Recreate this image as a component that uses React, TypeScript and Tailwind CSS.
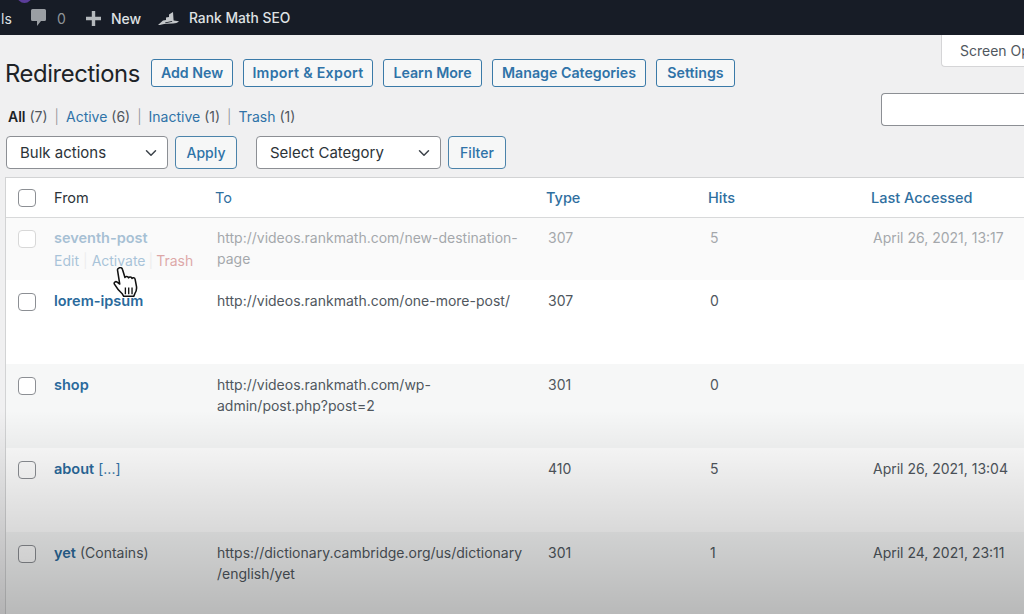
import { ChevronDown } from "lucide-react";

const font = { fontFamily: "Inter, 'Noto Sans', sans-serif" };

const actions = [
  { label: "Add New", w: "w-[82px]" },
  { label: "Import & Export", w: "w-[130px] tracking-[0.3px]" },
  { label: "Learn More", w: "w-[99px]" },
  { label: "Manage Categories", w: "w-[154px]" },
  { label: "Settings", w: "w-[79px]" },
];

const rows = [
  { h: "h-[62px] pt-[9px]", bg: "bg-[#fafafa]", from: "seventh-post", to: ["http://videos.rankmath.com/new-destination-", "page"], type: "307", hits: "5", last: "April 26, 2021, 13:17", faded: true },
  { h: "h-[84px] pt-[10px]", bg: "bg-white", from: "lorem-ipsum", to: ["http://videos.rankmath.com/one-more-post/"], type: "307", hits: "0", last: "" },
  { h: "h-[84px] pt-[10px]", bg: "bg-[#f6f7f7]", from: "shop", to: ["http://videos.rankmath.com/wp-", "admin/post.php?post=2"], type: "301", hits: "0", last: "" },
  { h: "h-[84px] pt-[10px]", bg: "bg-white", from: "about", extra: "[...]", extraBlue: true, to: [], type: "410", hits: "5", last: "April 26, 2021, 13:04" },
  { h: "h-[82px] pt-[10px]", bg: "bg-[#f6f7f7]", from: "yet", extra: "(Contains)", to: ["https://dictionary.cambridge.org/us/dictionary", "/english/yet"], type: "301", hits: "1", last: "April 24, 2021, 23:11" },
];

const Check = ({ faded }: { faded?: boolean }) => (
  <span className={`block h-[18px] w-[18px] rounded-[4px] border bg-white ${faded ? "border-[#d8d8d8]" : "border-[#8c8f94]"}`} />
);

const Select = ({ label, className }: { label: string; className: string }) => (
  <div className={`flex h-[33px] items-center justify-between rounded-[4px] border border-[#8c8f94] bg-white pl-[13px] pr-[7px] text-[15px] text-[#2c3338] ${className}`}>
    <span className="pt-[1px]">{label}</span>
    <ChevronDown size={18} strokeWidth={2} className="text-[#3c434a]" />
  </div>
);

const Sep = () => <span className="mx-[7px] font-light text-[#8c8f94]">|</span>;

export default function App() {
  return (
    <div style={font} className="relative h-[614px] w-[1024px] overflow-hidden bg-[#f0f0f1]">
      {/* admin bar */}
      <div className="relative flex h-[35px] items-center bg-[#171c26] pt-[2px] text-[14px] text-[#dfe1e3]">
        <span className="absolute left-[17px] top-[-12px] h-[15px] w-[15px] rounded-full bg-[#5b3d99]" />
        <span className="w-[31px] pl-[1px]">ls</span>
        <svg width="15" height="17" viewBox="0 0 15 17" className="-mt-[2px] text-[#9a9ea3]">
          <path fill="currentColor" d="M1.5 0h12A1.5 1.5 0 0 1 15 1.5v9a1.5 1.5 0 0 1-1.5 1.5H10l-4 5v-5H1.5A1.5 1.5 0 0 1 0 10.5v-9A1.5 1.5 0 0 1 1.500 0z" />
        </svg>
        <span className="ml-[11px] w-[9px] text-[#8f9499]">0</span>
        <svg width="15" height="15" viewBox="0 0 15 15" className="ml-[20px] text-[#b4b8bc]">
          <path fill="currentColor" d="M5.800 0h3.400v5.800H15v3.400H9.200V15H5.800V9.200H0V5.800h5.800z" />
        </svg>
        <span className="ml-[10px] w-[30px] font-medium">New</span>
        <svg width="21" height="14" viewBox="0 0 21 14" className="ml-[17px] text-[#c4c7ca]">
          <path fill="currentColor" d="M0 13l5-4.500 3-.5V5.500l3-.5V2.500L15 0l.6 8.500 5.400.8c-1.500 1.500-3.500 2.200-6 2.200l-6.500.2C5 12 2.500 13 0 13z" />
          <path fill="#171c26" d="M7 10.500l7-1.500.3.800-6.800 1.400z" />
        </svg>
        <span className="ml-[10px] text-[13.800px] font-medium">Rank Math SEO</span>
      </div>

      {/* page header */}
      <div className="flex">
        <div className="w-[881px] shrink-0">
          <div className="ml-[5px] mt-[24px] flex h-[28px] items-center">
            <h1 className="mr-[11px] w-[135px] pt-[1px] text-[23.8px] font-normal tracking-[-0.4px] text-[#1d2327]">Redirections</h1>
            <div className="flex gap-[10px]">
              {actions.map((a) => (
                <span key={a.label} className={`flex h-[28px] items-center justify-center rounded-[3px] border border-[#3a7aa8] bg-[#f6f7f7] text-[14.2px] font-semibold text-[#2f73a8] ${a.w}`}>
                  {a.label}
                </span>
              ))}
            </div>
          </div>
          <div className="ml-[8px] mt-[17px] flex h-[24px] items-center text-[14px] text-[#50575e]">
            <span className="font-semibold text-[#1d2327]">All</span>&nbsp;(7)
            <Sep />
            <span className="text-[#2f73a8]">Active</span>&nbsp;(6)
            <Sep />
            <span className="text-[#2f73a8]">Inactive</span>&nbsp;(1)
            <Sep />
            <span className="text-[#2f73a8]">Trash</span>&nbsp;(1)
          </div>
          <div className="ml-[6px] mt-[8px] flex items-center">
            <Select label="Bulk actions" className="w-[162px]" />
            <span className="ml-[7px] flex h-[33px] w-[62px] items-center justify-center rounded-[4px] border border-[#4b83aa] bg-[#f6f7f7] text-[14px] font-medium text-[#2f73a8]">Apply</span>
            <Select label="Select Category" className="ml-[19px] w-[185px]" />
            <span className="ml-[7px] flex h-[33px] w-[58px] items-center justify-center rounded-[4px] border border-[#4b83aa] bg-[#f6f7f7] text-[14px] font-medium text-[#2f73a8]">Filter</span>
          </div>
        </div>
        <div className="flex-1">
          <div className="ml-[60px] flex h-[32px] items-center overflow-hidden whitespace-nowrap rounded-bl-[4px] border-b border-l border-[#d5d5d7] bg-white pl-[18px] text-[14px] text-[#50575e]">
            Screen Options
          </div>
          <div className="mt-[26px] h-[33px] rounded-l-[4px] border-y border-l border-[#8c8f94] bg-white" />
        </div>
      </div>

      {/* table */}
      <div className="ml-[5px] mt-[8px] border-l border-t border-[#d2d3d4]">
        <div className="flex h-[40px] items-center border-b border-[#d8d9da] bg-white text-[14.5px] font-medium text-[#2f6f9f]">
          <span className="ml-[12px] w-[36px]"><Check /></span>
          <span className="w-[161px] font-normal text-[#2c3338]">From</span>
          <span className="w-[331px] font-normal">To</span>
          <span className="w-[162px]">Type</span>
          <span className="w-[163px]">Hits</span>
          <span>Last Accessed</span>
        </div>
        {rows.map((r) => (
          <div key={r.from} className={`flex ${r.h} ${r.bg} text-[14px] leading-[21px] text-[#50575e]`}>
            <span className="ml-[12px] w-[36px] pt-[3px]"><Check faded={r.faded} /></span>
            <div className={`w-[163px] ${r.faded ? "opacity-40" : ""}`}>
              <span className="text-[14.5px] font-semibold text-[#2a6a9c]">{r.from}</span>
              {r.extra && <span className={`ml-[4px] ${r.extraBlue ? "text-[#2f73a8]" : ""}`}>{r.extra}</span>}
              {r.faded && (
                <div className="mt-[2px] flex">
                  <span className="text-[#2f73a8]">Edit</span>
                  <span className="mx-[4px] text-[#dcdcde]">|</span>
                  <span className="text-[#2f73a8]">Activate</span>
                  <span className="mx-[3px] text-[#dcdcde]">|</span>
                  <span className="text-[#b32d2e]">Trash</span>
                </div>
              )}
            </div>
            <div className={`w-[331px] ${r.faded ? "opacity-50" : ""}`}>
              {r.to.map((l) => <div key={l}>{l}</div>)}
            </div>
            <span className={`w-[162px] ${r.faded ? "opacity-50" : ""}`}>{r.type}</span>
            <span className={`w-[163px] ${r.faded ? "opacity-50" : ""}`}>{r.hits}</span>
            <span className={r.faded ? "opacity-50" : ""}>{r.last}</span>
          </div>
        ))}
      </div>

      {/* hand cursor */}
      <svg width="27" height="31" viewBox="2 1.500 22 28" className="absolute left-[113px] top-[267px]">
        <path fill="#fff" stroke="#111" strokeWidth="1.400" strokeLinejoin="round" d="M6 2.500c1.400-1 3-.3 3.400 1.200l2.200 7.300c.6-1.400 2.700-1.200 3.200.3.700-1.200 2.700-1 3.100.5.800-1 2.600-.7 2.900.8l1.200 6.400c.4 2.600-.2 4.700-1.500 6.600l-1 2.400h-9l-1.600-2.600c-2-1.800-5.200-5.600-6.800-8.400-.8-1.500 1-3 2.500-1.900l2.300 1.800L5 5c-.3-1-.1-2 1-2.500z" />
        <path stroke="#111" strokeWidth="1.200" d="M12 20v6M15 20v6M18 20v6" />
      </svg>

      {/* video fade over the bottom of the page */}
      <div className="pointer-events-none absolute inset-x-0 bottom-0 h-[204px] bg-gradient-to-b from-black/0 to-black/25" />
    </div>
  );
}
